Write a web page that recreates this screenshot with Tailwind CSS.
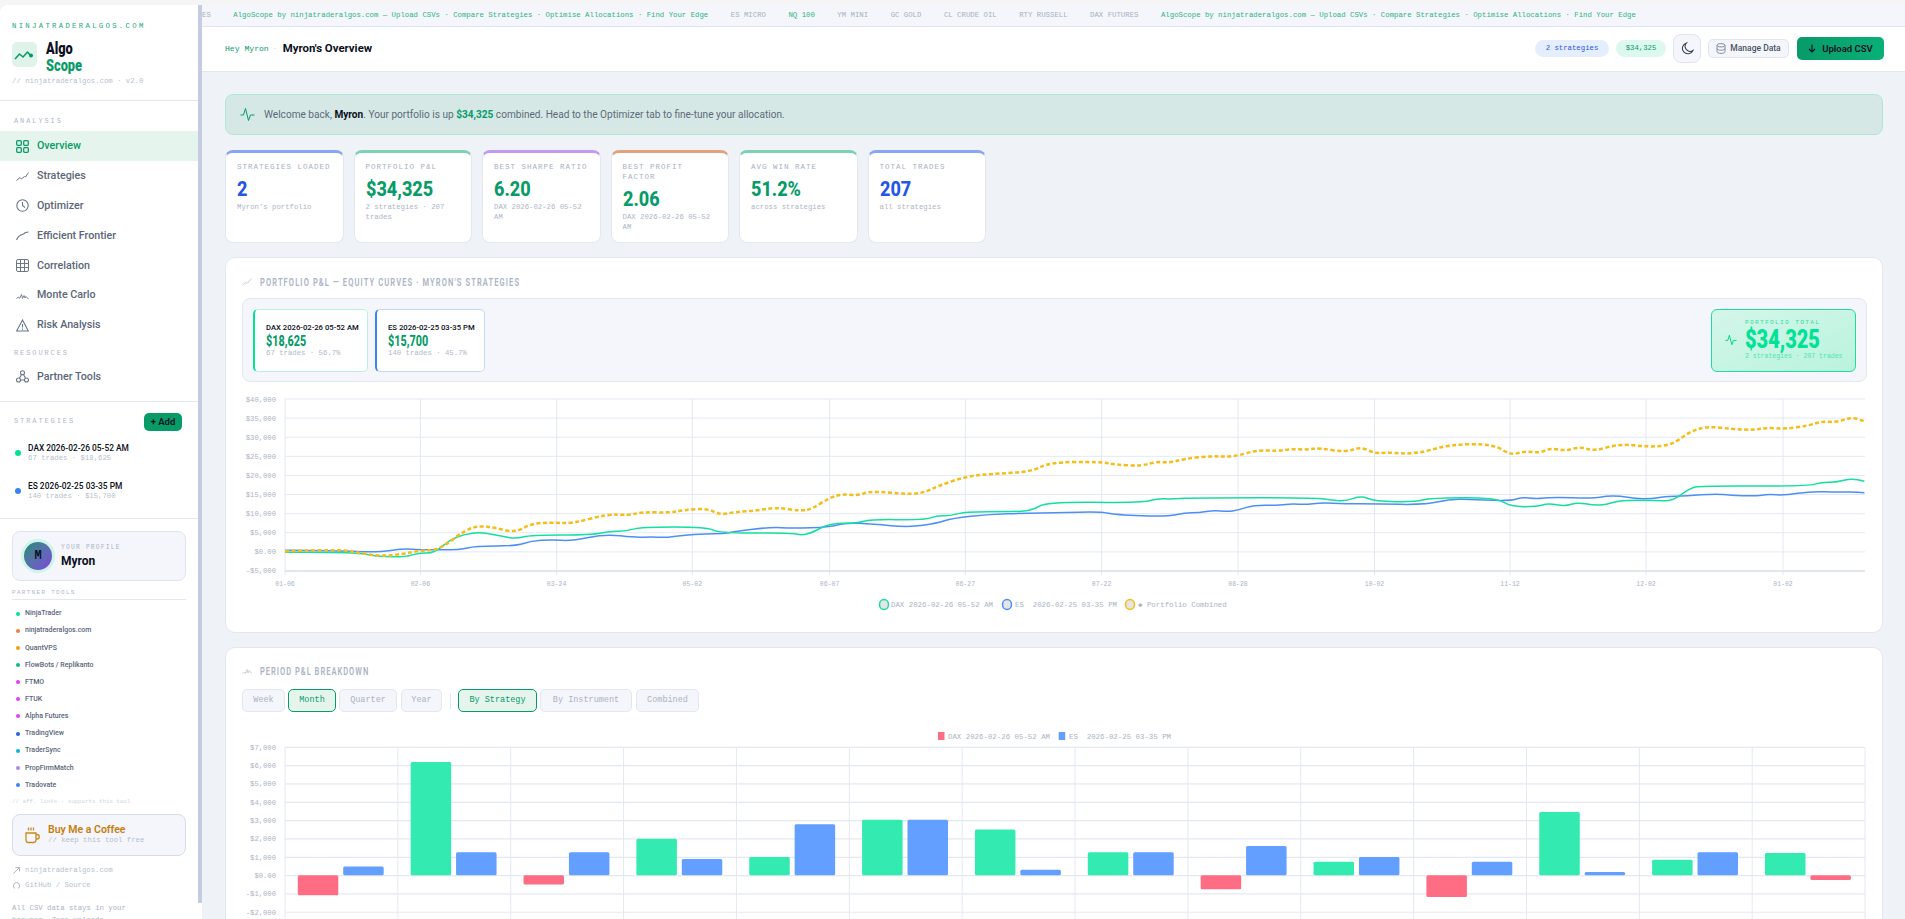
<!DOCTYPE html>
<html lang="en">
<head>
<meta charset="UTF-8" />
<title>AlgoScope</title>
<script src="https://cdn.jsdelivr.net/npm/@tailwindcss/browser@4"></script>
</head>
<body class="bg-[#f5f5f5] [font-family:Roboto,sans-serif]">
<div class="flex h-[919px] overflow-hidden pt-[5px]">

  <!-- sidebar -->
  <aside class="w-[198px] shrink-0 bg-white rounded-tl-lg overflow-hidden">
    <div class="h-[96px] border-b border-[#e2e7f0] pt-4 px-3">
      <div class="h-[10px] leading-[10px] text-[7.3px] tracking-[2.3px] text-[#22a87a] whitespace-nowrap [font-family:'Liberation_Mono',monospace]">NINJATRADERALGOS.COM</div>
      <div class="flex gap-[9px] h-[25px] mt-[11px]">
        <div class="w-[25px] h-[25px] rounded-[5px] bg-[#dff3ea] flex items-center justify-center">
          <svg width="21" height="21" viewBox="0 0 21 21" fill="none" stroke="#079b68" stroke-width="1.5" stroke-linejoin="round"><path d="M1 15l4.500-5 3.500 3 4.500-5 3 3.500"/><circle cx="17" cy="11.500" r="1.300" fill="#079b68"/></svg>
        </div>
        <div class="text-[16px] leading-[17px] font-black mt-[-2px] origin-left scale-x-[.8]">
          <div class="text-[#0b1020]">Algo</div>
          <div class="text-[#079b68]">Scope</div>
        </div>
      </div>
      <div class="h-[10px] leading-[10px] text-[7.3px] text-[#b5bfce] mt-[9px] whitespace-nowrap [font-family:'Liberation_Mono',monospace]">// ninjatraderalgos.com · v2.0</div>
    </div>

    <div class="pt-[15px] h-[10px] box-content leading-[10px] px-[14px] text-[7px] tracking-[1.9px] text-[#b0b8c8] [font-family:'Liberation_Mono',monospace]">ANALYSIS</div>
    <nav class="mt-[5px] text-[10.700px] font-medium text-[#5b6678]">
      <a class="flex items-center gap-2 h-[29.8px] pl-4 pt-px bg-[#e5f5ee] text-[#079b68]">
        <svg class="w-[13px] h-[13px]" viewBox="0 0 13 13" fill="none" stroke="#079b68" stroke-width="1.300"><rect x="0.700" y="0.700" width="4.600" height="4.600" rx="1"/><rect x="7.700" y="0.700" width="4.600" height="4.600" rx="1"/><rect x="0.700" y="7.700" width="4.600" height="4.600" rx="1"/><rect x="7.700" y="7.700" width="4.600" height="4.600" rx="1"/></svg>
        Overview</a>
      <a class="flex items-center gap-2 h-[29.8px] pl-4 pt-px">
        <svg class="w-[13px] h-[13px]" viewBox="0 0 13 13" fill="none" stroke="#6b7688" stroke-width="1"><path d="M0.500 10.500l3.500-3 1.500 1.500 3-2.500 1 .5 3-4.500"/></svg>
        Strategies</a>
      <a class="flex items-center gap-2 h-[29.8px] pl-4 pt-px">
        <svg class="w-[13px] h-[13px]" viewBox="0 0 13 13" fill="none" stroke="#6b7688" stroke-width="1.100"><circle cx="6.500" cy="6.500" r="5.700"/><path d="M6.500 3v3.500l2.500 2"/></svg>
        Optimizer</a>
      <a class="flex items-center gap-2 h-[29.8px] pl-4 pt-px">
        <svg class="w-[13px] h-[13px]" viewBox="0 0 13 13" fill="none" stroke="#6b7688" stroke-width="1.200"><path d="M0.500 11c1.500-3.500 4-5.500 7-6l2-1.500 3-.5"/></svg>
        Efficient Frontier</a>
      <a class="flex items-center gap-2 h-[29.8px] pl-4 pt-px">
        <svg class="w-[13px] h-[13px]" viewBox="0 0 13 13" fill="none" stroke="#6b7688" stroke-width="1"><rect x="0.500" y="0.500" width="12" height="12" rx="1.500"/><path d="M4.500 .5v12M8.500 .5v12M.5 4.500h12M.5 8.500h12"/></svg>
        Correlation</a>
      <a class="flex items-center gap-2 h-[29.8px] pl-4 pt-px">
        <svg class="w-[13px] h-[13px]" viewBox="0 0 13 13" fill="none" stroke="#6b7688" stroke-width="0.900"><path d="M0.500 9.500l2-1.500 1 1.500 2-4 1 4 1.500-3 1 2.500 1-1.500 2.500 2.500"/></svg>
        Monte Carlo</a>
      <a class="flex items-center gap-2 h-[29.8px] pl-4 pt-px">
        <svg class="w-[13px] h-[13px]" viewBox="0 0 13 13" fill="none" stroke="#6b7688" stroke-width="1.100"><path d="M6.500 1L.6 12h11.800z"/><path d="M6.500 5v3.500M6.500 9.500v1.200"/></svg>
        Risk Analysis</a>
    </nav>
    <div class="mt-[8.4px] h-[10px] leading-[10px] px-[14px] text-[7px] tracking-[1.9px] text-[#b0b8c8] [font-family:'Liberation_Mono',monospace]">RESOURCES</div>
    <div class="mt-1 pb-[9px] border-b border-[#e2e7f0]">
      <a class="flex items-center gap-2 h-[30px] pl-4 text-[10.700px] font-medium text-[#5b6678]">
        <svg class="w-[13px] h-[13px]" viewBox="0 0 13 13" fill="none" stroke="#6b7688" stroke-width="1.100"><circle cx="6.500" cy="2.800" r="2"/><circle cx="2.500" cy="10" r="2"/><circle cx="10.500" cy="10" r="2"/><path d="M5.500 4.500L3.500 8.300M7.500 4.500l2 3.800M4.500 10h4"/></svg>
        Partner Tools</a>
    </div>

    <div class="pt-[11px] pb-[16px] border-b border-[#e2e7f0] px-[14px]">
      <div class="flex items-center justify-between pr-0 mr-[2px] h-[18px]">
        <span class="text-[7px] tracking-[1.9px] text-[#b0b8c8] mt-[-1px] [font-family:'Liberation_Mono',monospace]">STRATEGIES</span>
        <span class="w-[38px] h-[18px] rounded-[5px] bg-[#079b68] text-[#0b1020] text-[9.500px] font-semibold flex items-center justify-center">+ Add</span>
      </div>
      <div class="flex items-center gap-[7px] mt-[11px] ml-px">
        <span class="w-[6px] h-[6px] rounded-full bg-[#00e396]"></span>
        <div>
          <div class="text-[9.300px] font-medium leading-[11px] text-[#0b1020] whitespace-nowrap origin-left scale-x-[.9]">DAX 2026-02-26 05-52 AM</div>
          <div class="text-[7.300px] leading-[11px] text-[#b5bfce] whitespace-nowrap [font-family:'Liberation_Mono',monospace]">67 trades · $18,625</div>
        </div>
      </div>
      <div class="flex items-center gap-[7px] mt-[16px] ml-px">
        <span class="w-[6px] h-[6px] rounded-full bg-[#3b82f6]"></span>
        <div>
          <div class="text-[9.300px] font-medium leading-[11px] text-[#0b1020] whitespace-nowrap origin-left scale-x-[.9]">ES 2026-02-25 03-35 PM</div>
          <div class="text-[7.300px] leading-[11px] text-[#b5bfce] whitespace-nowrap [font-family:'Liberation_Mono',monospace]">140 trades · $15,700</div>
        </div>
      </div>
    </div>

    <div class="px-3 pt-3">
      <div class="h-[50px] rounded-lg border border-[#dfe5f0] bg-[#f4f6fb] flex items-center gap-[9px] pl-[11px]">
        <div class="w-[28px] h-[28px] rounded-full bg-linear-to-br from-[#0f8a72] to-[#7c3fe0] ring-[3px] ring-[#cdf5e8] flex items-center justify-center text-[#0b1020] text-[12px] font-bold [font-family:'Liberation_Mono',monospace]">M</div>
        <div>
          <div class="text-[6.300px] tracking-[1.200px] leading-[9px] text-[#aab4c4] [font-family:'Liberation_Mono',monospace]">YOUR PROFILE</div>
          <div class="text-[12px] font-bold leading-[14px] text-[#0b1020] mt-[2px]">Myron</div>
        </div>
      </div>
      <div class="mt-[7px] h-[12px] leading-[10px] text-[6px] tracking-[1.300px] text-[#b0b8c8] border-b border-[#e2e7f0] [font-family:'Liberation_Mono',monospace]">PARTNER TOOLS</div>
      <div class="mt-[5px] text-[7px] font-medium text-[#5a6578]">
        <a class="flex items-center gap-[5px] h-[17.150px] pl-1"><span class="w-1 h-1 rounded-full bg-[#00e396]"></span>NinjaTrader</a>
        <a class="flex items-center gap-[5px] h-[17.150px] pl-1"><span class="w-1 h-1 rounded-full bg-[#f97c3c]"></span>ninjatraderalgos.com</a>
        <a class="flex items-center gap-[5px] h-[17.150px] pl-1"><span class="w-1 h-1 rounded-full bg-[#f59e0b]"></span>QuantVPS</a>
        <a class="flex items-center gap-[5px] h-[17.150px] pl-1"><span class="w-1 h-1 rounded-full bg-[#10b981]"></span>FlowBots / Replikanto</a>
        <a class="flex items-center gap-[5px] h-[17.150px] pl-1"><span class="w-1 h-1 rounded-full bg-[#e040fb]"></span>FTMO</a>
        <a class="flex items-center gap-[5px] h-[17.150px] pl-1"><span class="w-1 h-1 rounded-full bg-[#e040fb]"></span>FTUK</a>
        <a class="flex items-center gap-[5px] h-[17.150px] pl-1"><span class="w-1 h-1 rounded-full bg-[#e040fb]"></span>Alpha Futures</a>
        <a class="flex items-center gap-[5px] h-[17.150px] pl-1"><span class="w-1 h-1 rounded-full bg-[#2563eb]"></span>TradingView</a>
        <a class="flex items-center gap-[5px] h-[17.150px] pl-1"><span class="w-1 h-1 rounded-full bg-[#06b6d4]"></span>TraderSync</a>
        <a class="flex items-center gap-[5px] h-[17.150px] pl-1"><span class="w-1 h-1 rounded-full bg-[#a78bfa]"></span>PropFirmMatch</a>
        <a class="flex items-center gap-[5px] h-[17.150px] pl-1"><span class="w-1 h-1 rounded-full bg-[#3b82f6]"></span>Tradovate</a>
      </div>
      <div class="mt-[3px] h-[10px] leading-[10px] text-[5.800px] text-[#d0d6e0] whitespace-nowrap [font-family:'Liberation_Mono',monospace]">// aff. links · supports this tool</div>
      <div class="mt-[7px] h-[42px] rounded-lg border border-[#d6dcea] bg-[#f4f6fb] flex items-center gap-2 pl-[12px]">
        <svg width="15" height="18" viewBox="0 0 15 18" fill="none" stroke="#c98a1a" stroke-width="1.300"><path d="M1 7h10v7a2.500 2.500 0 0 1-2.500 2.500h-5A2.500 2.500 0 0 1 1 14z"/><path d="M11 8.500h1a2 2 0 0 1 0 4.500h-1"/><path d="M3.500 1.500v3M6 1.500v3M8.500 1.500v3"/></svg>
        <div>
          <div class="text-[10.500px] font-semibold leading-[11px] text-[#c77d0a]">Buy Me a Coffee</div>
          <div class="text-[7.300px] leading-[10px] text-[#b5bfce] whitespace-nowrap [font-family:'Liberation_Mono',monospace]">// keep this tool free</div>
        </div>
      </div>
      <div class="mt-[7.500px] text-[7.300px] text-[#b5bfce] [font-family:'Liberation_Mono',monospace]">
        <a class="flex items-center gap-[5px] h-[15px] ml-px">
          <svg width="7" height="7" viewBox="0 0 7 7" fill="none" stroke="#9aa5b5" stroke-width="0.800"><path d="M.5 6.500L6.500.5M2.500.5h4v4"/></svg>
          ninjatraderalgos.com</a>
        <a class="flex items-center gap-[5px] h-[15px] ml-px">
          <svg width="7" height="7" viewBox="0 0 7 7" fill="none" stroke="#9aa5b5" stroke-width="0.900"><path d="M2 6.500C.8 5.800.5 4.800.5 3.800.5 2 1.800.6 3.500.6S6.500 2 6.500 3.800c0 1-.3 2-1.500 2.700"/></svg>
          GitHub / Source</a>
        <p class="mt-[8.500px] leading-[12px] text-[#aab4c4] w-[125px]">All CSV data stays in your browser. Zero uploads.</p>
      </div>
    </div>
  </aside>

  <!-- sidebar scrollbar -->
  <div class="w-[4px] shrink-0 bg-white"><div class="h-[898px] bg-[#c5cce0]"></div></div>

  <main class="flex-1 min-w-0 bg-[#eff2f7] overflow-hidden">
    <!-- ticker -->
    <div class="h-[22px] flex items-center gap-[22.500px] bg-[#f4f6fb] border-b border-[#dfe4ef] overflow-hidden whitespace-nowrap text-[7.340px] text-[#a6b0bf] [font-family:'Liberation_Mono',monospace]">
      <span>ES</span>
      <span class="text-[#2fb184]">AlgoScope by ninjatraderalgos.com — Upload CSVs · Compare Strategies · Optimise Allocations · Find Your Edge</span>
      <span>ES MICRO</span><span class="text-[#2fb184]">NQ 100</span><span>YM MINI</span><span>GC GOLD</span><span>CL CRUDE OIL</span><span>RTY RUSSELL</span><span>DAX FUTURES</span>
      <span class="text-[#2fb184]">AlgoScope by ninjatraderalgos.com — Upload CSVs · Compare Strategies · Optimise Allocations · Find Your Edge</span>
    </div>

    <!-- header -->
    <header class="h-[44.500px] bg-white border-b border-[#e2e7f0] flex items-center pl-[23px] pr-[21px]">
      <span class="text-[8.100px] text-[#079b68] [font-family:'Liberation_Mono',monospace]">Hey Myron</span>
      <span class="text-[8px] text-[#aab4c4] mx-[5px]">·</span>
      <span class="text-[11.400px] font-bold text-[#0b1020] ml-[2px]">Myron's Overview</span>
      <div class="ml-auto flex items-center">
        <span class="h-[17px] w-[74px] rounded-full bg-[#e5eefd] text-[#2557e6] text-[7.300px] flex items-center justify-center [font-family:'Liberation_Mono',monospace]">2 strategies</span>
        <span class="h-[17px] w-[50px] ml-[7px] rounded-full bg-[#dcf8ef] text-[#079b68] text-[7.300px] flex items-center justify-center [font-family:'Liberation_Mono',monospace]">$34,325</span>
        <span class="h-[29px] w-[28px] ml-[7px] rounded-lg bg-[#f4f6fb] border border-[#dfe4ef] flex items-center justify-center">
          <svg width="13" height="13" viewBox="0 0 13 13" fill="none" stroke="#3a4252" stroke-width="1.100"><path d="M5.500 1a5.500 5.500 0 1 0 6.500 7.500A5 5 0 0 1 5.500 1z"/></svg>
        </span>
        <span class="h-[19px] w-[81px] ml-[7px] rounded-[5px] bg-[#f4f6fb] border border-[#dfe4ef] flex items-center justify-center gap-1 text-[8.500px] font-medium text-[#4a5464]">
          <svg width="10" height="11" viewBox="0 0 10 11" fill="none" stroke="#7b8596" stroke-width="0.900"><ellipse cx="5" cy="2.300" rx="4" ry="1.700"/><path d="M1 2.300v6.400c0 1 1.800 1.700 4 1.700s4-.7 4-1.700V2.300M1 5.500c0 1 1.800 1.700 4 1.700s4-.7 4-1.700"/></svg>
          Manage Data</span>
        <span class="h-[23px] w-[87px] ml-[8px] rounded-[5px] bg-linear-to-r from-[#079b68] to-[#0ab077] flex items-center justify-center gap-[6px] text-[9.500px] font-semibold text-[#0b1020]">
          <svg width="8" height="9" viewBox="0 0 8 9" fill="none" stroke="#0b1020" stroke-width="1.100"><path d="M4 .5v7.500M1 5l3 3 3-3"/></svg>
          Upload CSV</span>
      </div>
    </header>

    <div class="pl-[23px] pr-[22px] pt-[22.500px]">
      <!-- welcome banner -->
      <div class="h-[40.500px] rounded-lg bg-[#d6e8e6] border border-[#aee8d3] flex items-center pl-[14px] gap-[9px] text-[10.100px] text-[#5c6b78]">
        <svg width="15" height="15" viewBox="0 0 15 15" fill="none" stroke="#079b68" stroke-width="1"><path d="M.5 8h3l2-6.500 3 12 2-5.500h4"/></svg>
        <span>Welcome back, <b class="font-bold text-[#0b1020]">Myron</b>. Your portfolio is up <b class="font-bold text-[#079b68]">$34,325</b> combined. Head to the Optimizer tab to fine-tune your allocation.</span>
      </div>

      <!-- stat cards -->
      <div class="flex gap-[10px] mt-[15px] h-[93.500px]">
        <div class="w-[118.500px] rounded-lg bg-white border border-[#e2e7f0] border-t-[3px] border-t-[#8aa6f2] px-[11px] pt-[9px]">
          <div class="text-[7.500px] leading-[10px] tracking-[1px] text-[#a7b1c0] [font-family:'Liberation_Mono',monospace]">STRATEGIES LOADED</div>
          <div class="text-[21px] font-extrabold leading-[22px] mt-[6px] text-[#2557e6] origin-left scale-x-[.86]">2</div>
          <div class="text-[7.300px] leading-[10.500px] mt-[2px] text-[#adb6c4] [font-family:'Liberation_Mono',monospace]">Myron's portfolio</div>
        </div>
        <div class="w-[118.500px] rounded-lg bg-white border border-[#e2e7f0] border-t-[3px] border-t-[#7fd1b4] px-[11px] pt-[9px]">
          <div class="text-[7.500px] leading-[10px] tracking-[1px] text-[#a7b1c0] [font-family:'Liberation_Mono',monospace]">PORTFOLIO P&amp;L</div>
          <div class="text-[21px] font-extrabold leading-[22px] mt-[6px] text-[#079b68] origin-left scale-x-[.86]">$34,325</div>
          <div class="text-[7.300px] leading-[10.500px] mt-[2px] text-[#adb6c4] [font-family:'Liberation_Mono',monospace]">2 strategies · 207 trades</div>
        </div>
        <div class="w-[118.500px] rounded-lg bg-white border border-[#e2e7f0] border-t-[3px] border-t-[#c39af0] px-[11px] pt-[9px]">
          <div class="text-[7.500px] leading-[10px] tracking-[1px] text-[#a7b1c0] [font-family:'Liberation_Mono',monospace]">BEST SHARPE RATIO</div>
          <div class="text-[21px] font-extrabold leading-[22px] mt-[6px] text-[#079b68] origin-left scale-x-[.86]">6.20</div>
          <div class="text-[7.300px] leading-[10.500px] mt-[2px] text-[#adb6c4] [font-family:'Liberation_Mono',monospace]">DAX 2026-02-26 05-52 AM</div>
        </div>
        <div class="w-[118.500px] rounded-lg bg-white border border-[#e2e7f0] border-t-[3px] border-t-[#e0a37e] px-[11px] pt-[9px]">
          <div class="text-[7.500px] leading-[10px] tracking-[1px] text-[#a7b1c0] [font-family:'Liberation_Mono',monospace]">BEST PROFIT FACTOR</div>
          <div class="text-[21px] font-extrabold leading-[22px] mt-[6px] text-[#079b68] origin-left scale-x-[.86]">2.06</div>
          <div class="text-[7.300px] leading-[10.500px] mt-[2px] text-[#adb6c4] [font-family:'Liberation_Mono',monospace]">DAX 2026-02-26 05-52 AM</div>
        </div>
        <div class="w-[118.500px] rounded-lg bg-white border border-[#e2e7f0] border-t-[3px] border-t-[#7fd1b4] px-[11px] pt-[9px]">
          <div class="text-[7.500px] leading-[10px] tracking-[1px] text-[#a7b1c0] [font-family:'Liberation_Mono',monospace]">AVG WIN RATE</div>
          <div class="text-[21px] font-extrabold leading-[22px] mt-[6px] text-[#079b68] origin-left scale-x-[.86]">51.2%</div>
          <div class="text-[7.300px] leading-[10.500px] mt-[2px] text-[#adb6c4] [font-family:'Liberation_Mono',monospace]">across strategies</div>
        </div>
        <div class="w-[118.500px] rounded-lg bg-white border border-[#e2e7f0] border-t-[3px] border-t-[#8aa6f2] px-[11px] pt-[9px]">
          <div class="text-[7.500px] leading-[10px] tracking-[1px] text-[#a7b1c0] [font-family:'Liberation_Mono',monospace]">TOTAL TRADES</div>
          <div class="text-[21px] font-extrabold leading-[22px] mt-[6px] text-[#2557e6] origin-left scale-x-[.86]">207</div>
          <div class="text-[7.300px] leading-[10.500px] mt-[2px] text-[#adb6c4] [font-family:'Liberation_Mono',monospace]">all strategies</div>
        </div>
      </div>

      <!-- equity curves -->
      <section class="mt-[14px] h-[376px] rounded-[10px] bg-white border border-[#e2e7f0] pt-[18px] px-4">
        <div class="flex items-center gap-2 h-[12px]">
          <svg width="10" height="8" viewBox="0 0 10 8" fill="none" stroke="#b5bfce" stroke-width="0.800"><path d="M.5 7l3-2.500 1.500 1 4.500-5"/></svg>
          <h2 class="text-[10px] font-semibold tracking-[1.500px] text-[#aab4c4] whitespace-nowrap origin-left scale-x-[.75]">PORTFOLIO P&amp;L — EQUITY CURVES · MYRON'S STRATEGIES</h2>
        </div>
        <div class="mt-[10px] h-[84px] rounded-lg bg-[#f4f6fb] border border-[#e2e7f0] flex items-center gap-[7px] px-[10px] mr-[-1px]">
          <div class="w-[115px] h-[63px] rounded-[5px] bg-white border border-[#b5f3dd] border-l-2 border-l-[#00e396] pl-[11px] flex flex-col justify-center">
            <div class="text-[7.700px] leading-[10px] font-medium text-[#0b1020] whitespace-nowrap">DAX 2026-02-26 05-52 AM</div>
            <div class="text-[15px] leading-[14px] font-extrabold text-[#079b68] mt-[1px] origin-left scale-x-[.72]">$18,625</div>
            <div class="text-[7.300px] leading-[10px] text-[#b0b9c8] [font-family:'Liberation_Mono',monospace]">67 trades · 56.7%</div>
          </div>
          <div class="w-[110px] h-[63px] rounded-[5px] bg-white border border-[#c4d8f8] border-l-2 border-l-[#3b82f6] pl-[11px] flex flex-col justify-center">
            <div class="text-[7.700px] leading-[10px] font-medium text-[#0b1020] whitespace-nowrap">ES 2026-02-25 03-35 PM</div>
            <div class="text-[15px] leading-[14px] font-extrabold text-[#079b68] mt-[1px] origin-left scale-x-[.72]">$15,700</div>
            <div class="text-[7.300px] leading-[10px] text-[#b0b9c8] [font-family:'Liberation_Mono',monospace]">140 trades · 45.7%</div>
          </div>
          <div class="ml-auto w-[145px] h-[63px] rounded-[6px] bg-linear-to-br from-[#d4f6ea] to-[#b9f3de] border border-[#1fdc9c] flex items-center gap-[8px] pl-[13px]">
            <svg width="12" height="12" viewBox="0 0 15 15" fill="none" stroke="#00d48c" stroke-width="1.200"><path d="M.5 8h3l2-6.500 3 12 2-5.500h4"/></svg>
            <div>
              <div class="text-[6.200px] leading-[9px] tracking-[1.300px] text-[#2ddf9f] whitespace-nowrap [font-family:'Liberation_Mono',monospace]">PORTFOLIO TOTAL</div>
              <div class="text-[25px] leading-[25px] font-black text-[#00e396] origin-left scale-x-[.8]">$34,325</div>
              <div class="text-[6.500px] leading-[10px] text-[#4ce6b0] whitespace-nowrap [font-family:'Liberation_Mono',monospace]">2 strategies · 207 trades</div>
            </div>
          </div>
        </div>
        <svg id="equity" class="block mt-[10px] mx-[-1px]" width="1626" height="225" viewBox="241 392 1626 225"></svg>
      </section>

      <!-- period breakdown -->
      <section class="mt-[14px] h-[300px] rounded-[10px] bg-white border border-[#e2e7f0] pt-[17px] px-4">
        <div class="flex items-center gap-2 h-[12px]">
          <svg width="10" height="8" viewBox="0 0 10 8" fill="none" stroke="#b5bfce" stroke-width="0.700"><path d="M.5 7l2-2 1 1.500 1.500-4 1 3.500 1.200-2.500 2.300 3"/></svg>
          <h2 class="text-[10px] font-semibold tracking-[1.350px] text-[#aab4c4] whitespace-nowrap origin-left scale-x-[.75]">PERIOD P&amp;L BREAKDOWN</h2>
        </div>
        <div class="flex items-center mt-[12px] text-[8.500px] text-[#aab4c4] [font-family:'Liberation_Mono',monospace]">
          <button class="w-[43px] h-[23px] rounded-[5px] bg-[#f4f6fb] border border-[#e2e7f0]">Week</button>
          <button class="w-[48px] h-[23px] ml-[3px] rounded-[5px] bg-[#e5f5ee] border border-[#079b68] text-[#079b68]">Month</button>
          <button class="w-[58px] h-[23px] ml-[3px] rounded-[5px] bg-[#f4f6fb] border border-[#e2e7f0]">Quarter</button>
          <button class="w-[41px] h-[23px] ml-[4px] rounded-[5px] bg-[#f4f6fb] border border-[#e2e7f0]">Year</button>
          <span class="w-px h-4 bg-[#e2e7f0] ml-[8px]"></span>
          <button class="w-[79px] h-[23px] ml-[7px] rounded-[5px] bg-[#e5f5ee] border border-[#079b68] text-[#079b68]">By Strategy</button>
          <button class="w-[92px] h-[23px] ml-[3px] rounded-[5px] bg-[#f4f6fb] border border-[#e2e7f0]">By Instrument</button>
          <button class="w-[63px] h-[23px] ml-[4px] rounded-[5px] bg-[#f4f6fb] border border-[#e2e7f0]">Combined</button>
        </div>
        <svg id="bars" class="block mt-[13px] mx-[-1px]" width="1626" height="200" viewBox="241 725 1626 200"></svg>
      </section>
    </div>
  </main>
</div>

<script>
  const MONO = "font-family=\"Liberation Mono, monospace\"";
  const GRID = "#e4e8f1";
  const LABEL = "#aab4c4";

  function moneyLabel(v) {
    const abs = Math.abs(v).toLocaleString("en-US");
    return (v < 0 ? "-$" : "$") + (v === 0 ? "0.00" : abs);
  }

  // pixel points traced off the equity chart
  const dax = [[285,552.3],[352.6,551.7],[378,556.7],[406,557],[419,552.7],[434,553.3],[449.5,540],[465,534],[480,532.3],[495,534.7],[515,539],[531,535],[592,535],[610,531],[625.5,531.3],[641,527],[707,527],[720,533.3],[791,532.7],[801.5,535.3],[812,532.7],[829.6,523.3],[857.6,523.3],[870.4,519.3],[924,520],[937,515.7],[949.5,516],[965,511.7],[1010.7,511.7],[1032,510.7],[1046,502],[1141,502.7],[1157,498.7],[1173,499],[1196,497.7],[1317,497.7],[1332,500.3],[1346,501],[1361,495.7],[1375,501.3],[1415.5,502],[1430,498],[1496,497.7],[1510.7,506.7],[1536.6,506.7],[1548,503.3],[1565.5,506.3],[1577,502.3],[1594,505.3],[1606,504.7],[1620,500.3],[1655,500.3],[1672,501.3],[1689.6,488.3],[1701,485.7],[1808,486.3],[1822,482],[1837,482.3],[1851,478.3],[1864.4,481.3]];
  const es = [[285,550.3],[337,550.7],[378,552.3],[403.6,548.7],[419,549.7],[460,550],[475,546],[516,546],[531,541],[551.5,539.7],[572,541],[605,534],[636,537.7],[651,536.7],[666,537.7],[681.6,535.3],[707,533.7],[722.5,533.7],[735,531.7],[771,527],[791,528.3],[829.6,527.3],[845,522.7],[873,524],[909,527.3],[937,523.3],[952,518.3],[990,514.3],[1025,513.3],[1058,512.7],[1101,511.7],[1115.4,514.7],[1167,516.7],[1184.6,512.7],[1199,512.7],[1213.5,510.3],[1228,511.7],[1239.5,509.7],[1254,505],[1280,505.3],[1291.4,503.7],[1306,504.7],[1320,502.7],[1346,503.7],[1375,504],[1427,504.7],[1450,499],[1473,499.7],[1510.7,501],[1522,497],[1536.6,499],[1551,497],[1594,498.3],[1606,496],[1620,496],[1635,498.7],[1652,498.7],[1663.6,496.7],[1686.7,496],[1715.5,493.7],[1730,495.3],[1756,496],[1767.5,494.3],[1785,495.3],[1811,491.3],[1837,492.3],[1851,491.7],[1864.4,492.7]];
  const combined = [[285,551.3],[340,549.3],[357.7,552.7],[380.6,556.3],[403.6,554],[421.4,550.3],[439,550],[465,530],[480,525.7],[495,527.7],[515,532.7],[531,523.7],[551.5,522.3],[572,523.7],[607.7,514],[628,515.3],[643.4,512],[669,512.7],[684,510],[707,508.3],[720,515],[735,512],[755.6,510.7],[776,507.3],[801.5,511],[811.7,509],[829.6,497.7],[842.3,494],[857.6,495.7],[870.4,491],[908.7,494.3],[924,492.7],[939,485.7],[965,476.7],[990,474],[1032,471.7],[1049,462.3],[1101,461.7],[1115.4,464.7],[1141,466],[1156,461.7],[1170,462.7],[1184.6,458.7],[1210.6,456],[1233.7,457],[1256.8,450],[1277,451],[1291.4,449],[1306,449.7],[1320,448],[1346,452.3],[1360.6,446.7],[1375,453.7],[1386.6,452.3],[1415.5,454.3],[1450,444.3],[1493.4,444],[1510.7,455.3],[1525,451],[1539.5,453],[1551,448],[1565.5,451],[1580,446.7],[1594,451],[1620,443.7],[1649,447],[1672,445],[1689.6,431.7],[1707,426.3],[1733,429],[1753,430],[1767.5,427.7],[1785,429],[1808,425.7],[1822,421.3],[1837,422.3],[1851,417],[1864.4,421.3]];

  function smooth(pts) {
    let d = "M" + pts[0].join(" ");
    for (let i = 1; i < pts.length - 1; i++) {
      const mx = (pts[i][0] + pts[i + 1][0]) / 2;
      const my = (pts[i][1] + pts[i + 1][1]) / 2;
      d += "Q" + pts[i][0] + " " + pts[i][1] + " " + mx + " " + my;
    }
    return d + "L" + pts[pts.length - 1].join(" ");
  }

  function drawEquity() {
    let s = "";
    const xs = [285,420.4,556.6,692.3,829.6,965.3,1101.6,1238,1374.5,1510,1646,1783];
    const dates = ["01-06","02-06","03-24","05-02","06-07","06-27","07-22","08-28","10-02","11-12","12-02","01-02"];
    xs.forEach((x, i) => {
      s += `<line x1="${x}" x2="${x}" y1="399" y2="575" stroke="${GRID}"/>`;
      s += `<text x="${x}" y="586" text-anchor="middle" font-size="6.5" fill="${LABEL}" ${MONO}>${dates[i]}</text>`;
    });
    for (let i = 0; i < 10; i++) {
      const y = 399 + i * 19.11;
      s += `<line x1="285" x2="1865" y1="${y}" y2="${y}" stroke="${i == 9 ? '#d9dfea' : GRID}" stroke-width="${i == 9 ? 1.5 : 1}"/>`;
      s += `<text x="276" y="${y + 2.5}" text-anchor="end" font-size="7.2" fill="${LABEL}" ${MONO}>${moneyLabel(40000 - i * 5000)}</text>`;
    }
    s += `<path d="${smooth(es)}" fill="none" stroke="#4d8ff7" stroke-width="1.5"/>`;
    s += `<path d="${smooth(dax)}" fill="none" stroke="#14dfa0" stroke-width="1.5"/>`;
    s += `<path d="${smooth(combined)}" fill="none" stroke="#f5bd16" stroke-width="2.5" stroke-dasharray="4 2.500"/>`;
    const legend = [[884, "#14dfa0", 891, "DAX 2026-02-26 05-52 AM"], [1007, "#4d8ff7", 1015, "ES  2026-02-25 03-35 PM"], [1130, "#f5bd16", 1138, "◆ Portfolio Combined"]];
    legend.forEach(l => {
      s += `<ellipse cx="${l[0]}" cy="604.5" rx="4.5" ry="5" fill="#e5e5e5" stroke="${l[1]}" stroke-width="1.5"/>`;
      s += `<text x="${l[2]}" y="607" xml:space="preserve" font-size="7.4" fill="${LABEL}" ${MONO}>${l[3]}</text>`;
    });
    document.getElementById("equity").innerHTML = s;
  }

  const GREEN = "#33ebb0", BLUE = "#629ffe", RED = "#ff6d85";
  const periods = [[-1090,480],[6180,1260],[-500,1260],[2000,890],[1000,2780],[3030,3030],[2500,300],[1260,1260],[-760,1600],[740,1000],[-1180,740],[3460,180],[850,1260],[1220,-260]];

  function drawBars() {
    let s = "";
    const zero = 875.3, perK = 18.33, step = 112.86;
    for (let i = 0; i <= 14; i++) {
      const x = 285 + i * step;
      s += `<line x1="${x}" x2="${x}" y1="747.3" y2="925" stroke="${GRID}"/>`;
    }
    for (let i = 0; i < 10; i++) {
      const y = 747.3 + i * perK;
      s += `<line x1="285" x2="1865" y1="${y}" y2="${y}" stroke="${GRID}" stroke-width="1.2"/>`;
      s += `<text x="276" y="${y + 2.5}" text-anchor="end" font-size="7.2" fill="${LABEL}" ${MONO}>${moneyLabel(7000 - i * 1000)}</text>`;
    }
    const w = 40.5;
    function bar(x, v, positiveColor) {
      const h = Math.abs(v) / 1000 * perK;
      const y = v >= 0 ? zero - h : zero;
      const fill = v >= 0 ? positiveColor : RED;
      return `<rect x="${x}" y="${y}" width="${w}" height="${h}" rx="1.5" fill="${fill}"/>`;
    }
    periods.forEach((p, i) => {
      const x = 285 + i * step + 12.8;
      s += bar(x, p[0], GREEN) + bar(x + 45.4, p[1], BLUE);
    });
    s += `<rect x="938" y="732" width="6.5" height="8" fill="${RED}"/>`;
    s += `<text x="948" y="738.5" font-size="7.4" fill="${LABEL}" ${MONO}>DAX 2026-02-26 05-52 AM</text>`;
    s += `<rect x="1058.7" y="732" width="6.5" height="8" fill="${BLUE}"/>`;
    s += `<text x="1069" y="738.5" xml:space="preserve" font-size="7.4" fill="${LABEL}" ${MONO}>ES  2026-02-25 03-35 PM</text>`;
    document.getElementById("bars").innerHTML = s;
  }

  drawEquity();
  drawBars();
</script>
</body>
</html>
